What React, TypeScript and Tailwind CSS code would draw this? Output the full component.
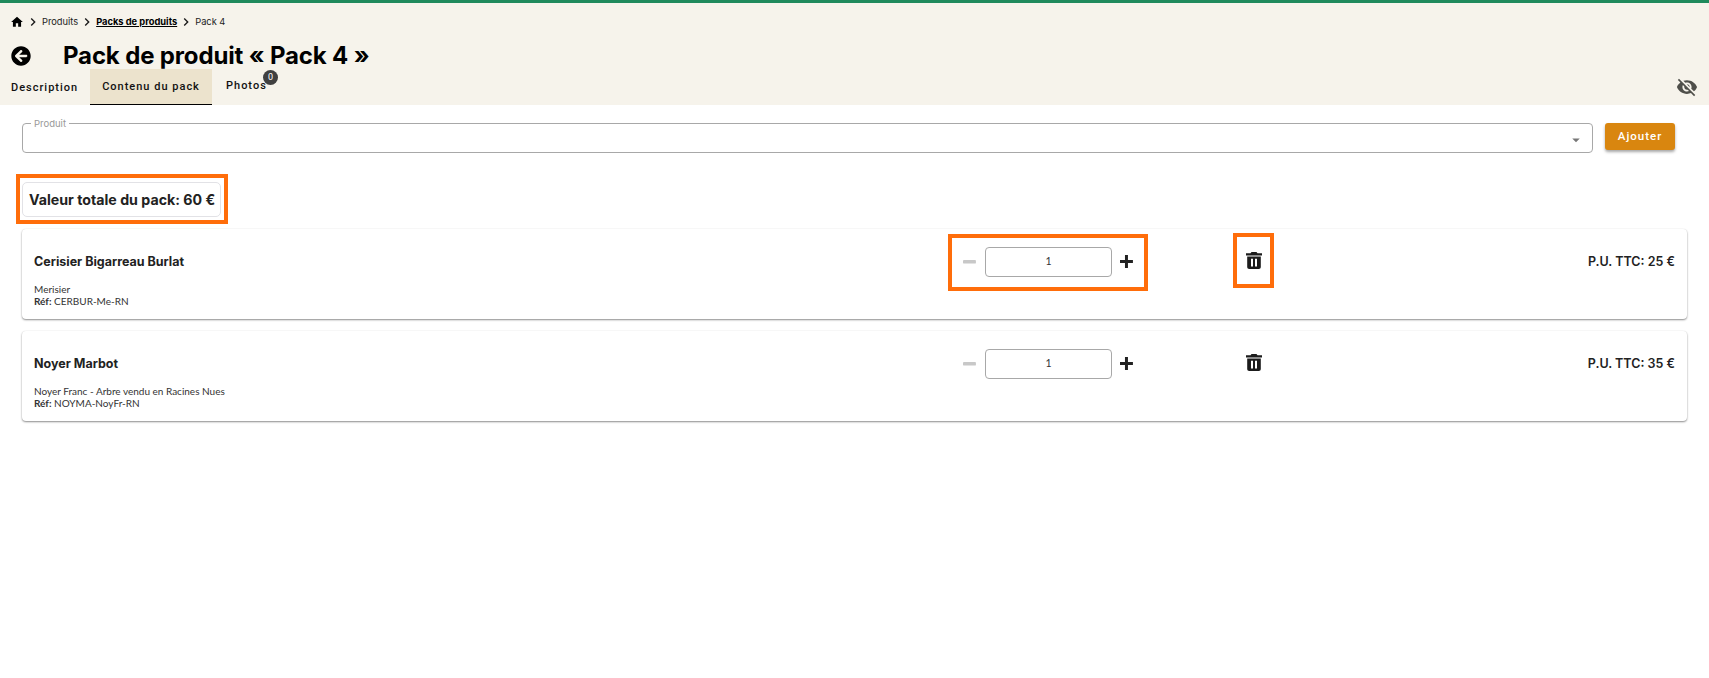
import { FaArrowCircleLeft } from "react-icons/fa";
import { MdArrowDropDown, MdChevronRight, MdHome, MdVisibilityOff } from "react-icons/md";

const products = [
  { name: "Cerisier Bigarreau Burlat", detail: "Merisier", ref: "CERBUR-Me-RN", price: "25 €", marked: true },
  { name: "Noyer Marbot", detail: "Noyer Franc - Arbre vendu en Racines Nues", ref: "NOYMA-NoyFr-RN", price: "35 €", marked: false },
];

const Separator = () => <MdChevronRight className="w-[16px] h-[16px] text-[#1a1a1a] mx-[1px]" />;

const MinusIcon = () => (
  <svg viewBox="0 0 13 13" className="w-[13px] h-[13px] mt-[8px] text-[#c8c8c8]">
    <rect x="0" y="5" width="13" height="3.4" rx="0.5" fill="currentColor" />
  </svg>
);

const PlusIcon = () => (
  <svg viewBox="0 0 13 13" className="ml-[8px] w-[13px] h-[13px] mt-[8px] text-[#222]">
    <path d="M5 0h3v5h5v3H8v5H5V8H0V5h5z" fill="currentColor" />
  </svg>
);

const TrashIcon = () => (
  <svg viewBox="0 0 16 17" className="w-[16px] h-[17px] text-[#1c1c1c]">
    <path
      fillRule="evenodd"
      d="M5.5 0h5l1 1.2H16v2.3H0V1.2h4.5zM1.2 4.5h13.6V15c0 1.2-.8 2-2 2H3.2c-1.2 0-2-.8-2-2zM5 6.8v7.6h2V6.8zm4 0v7.6h2V6.8z"
      fill="currentColor"
    />
  </svg>
);

const ProductCard = ({ name, detail, ref: reference, price, marked }: (typeof products)[number]) => (
  <div className="flex h-[90px] rounded-[4px] bg-white pl-[12px] pr-[12px] shadow-[0_1px_2px_rgba(0,0,0,0.45),0_0_1px_rgba(0,0,0,0.08)]">
    <div className="w-[929px] flex flex-col">
      <div className="mt-[24px] h-[18px] text-[12.5px] leading-[18px] font-bold text-[#222]">{name}</div>
      <div className="mt-[12px] font-['Lato',sans-serif] text-[10px] leading-[12px] text-[#333]">{detail}</div>
      <div className="font-['Lato',sans-serif] text-[10px] leading-[12px] text-[#333]">
        <span className="font-bold">Réf:</span> {reference}
      </div>
    </div>
    <div className="relative w-[170px] h-[48px] pt-[18px] flex items-start">
      <MinusIcon />
      <div className="ml-[9px] w-[128px] h-[30px] rounded-[4px] border border-[#a8a8a8] flex items-center justify-center font-['Lato',sans-serif] text-[10.5px] text-[#333]">1</div>
      <PlusIcon />
      {marked && <div className="absolute left-[-15px] top-[5px] w-[200px] h-[57px] border-[4px] border-[#ff6d0a]" />}
    </div>
    <div className="relative ml-[100px] w-[41px] pt-[23px] flex justify-center items-start">
      <TrashIcon />
      {marked && <div className="absolute left-0 top-[4px] w-[41px] h-[55px] border-[4px] border-[#ff6d0a]" />}
    </div>
    <div className="flex-1 pt-[24px] text-right text-[12.5px] leading-[18px] font-semibold text-[#222]">P.U. TTC: {price}</div>
  </div>
);

const App = () => {
  return (
    <div className="min-h-[678px] bg-white font-['Inter','Liberation_Sans',sans-serif]">
      <div className="h-[3px] bg-[#1f8a5c]" />
      <header className="h-[102px] bg-[#f6f3eb] relative">
        <nav className="flex items-center h-[16px] translate-y-[11px] pl-[10px] text-[9.3px] text-[#222]">
          <MdHome className="w-[14px] h-[14px] text-black" />
          <MdChevronRight className="w-[16px] h-[16px] ml-[1px] mr-[1px] text-[#1a1a1a]" />
          <span>Produits</span>
          <Separator />
          <span className="font-bold underline text-black">Packs de produits</span>
          <Separator />
          <span>Pack 4</span>
        </nav>
        <div className="flex items-center mt-[24px] pl-[11px]">
          <FaArrowCircleLeft className="w-[20px] h-[20px] text-black" />
          <h1 className="ml-[32px] text-[24px] leading-[26px] font-bold text-black tracking-[-0.15px]">Pack de produit « Pack 4 »</h1>
        </div>
        <div className="flex h-[36px] font-['Roboto',sans-serif] text-[11px] font-medium tracking-[1px] text-[#111]">
          <div className="w-[90px] pl-[11px] pt-[2px] flex items-center">Description</div>
          <div className="w-[122px] pt-[2px] flex items-center justify-center bg-[#ece3cd] border-b-[1.5px] border-black">Contenu du pack</div>
          <div className="relative pl-[14px] flex items-center pb-[2px]">
            Photos
            <span className="absolute left-[51px] top-[1px] w-[15px] h-[15px] rounded-full bg-[#404040] text-white text-[9px] font-normal tracking-normal flex items-center justify-center">0</span>
          </div>
        </div>
        <MdVisibilityOff className="absolute right-[11px] bottom-[7px] w-[22px] h-[22px] text-[#4f4f4a]" />
      </header>

      <main className="px-[22px]">
        <div className="flex pt-[18px] gap-[12px] pr-[12px]">
          <div className="relative flex-1 h-[30px] rounded-[4px] border border-[#a8a8a8]">
            <span className="absolute left-[8px] top-[-6px] bg-white px-[3px] text-[9.5px] leading-[11px] text-[#999]">Produit</span>
            <MdArrowDropDown className="absolute right-[7px] top-[7px] w-[18px] h-[18px] text-[#777]" />
          </div>
          <button className="w-[70px] h-[27px] rounded-[3px] bg-[#d9860f] text-white text-[11.5px] font-medium tracking-[1px] font-['Roboto',sans-serif] shadow-[0_2px_3px_rgba(0,0,0,0.35)]">Ajouter</button>
        </div>

        <div className="relative mt-[29px] w-[199px] h-[35px] rounded-[5px] border border-[#e2e2e6] flex items-center pl-[6px] text-[14.2px] font-bold text-[#222]">
          Valeur totale du pack: 60 €
          <div className="absolute left-[-7px] top-[-9px] w-[212px] h-[50px] border-[4px] border-[#ff6d0a]" />
        </div>

        <div className="mt-[12px] flex flex-col gap-[12px]">
          {products.map((p) => (
            <ProductCard key={p.ref} {...p} />
          ))}
        </div>
      </main>
    </div>
  );
};

export default App;
